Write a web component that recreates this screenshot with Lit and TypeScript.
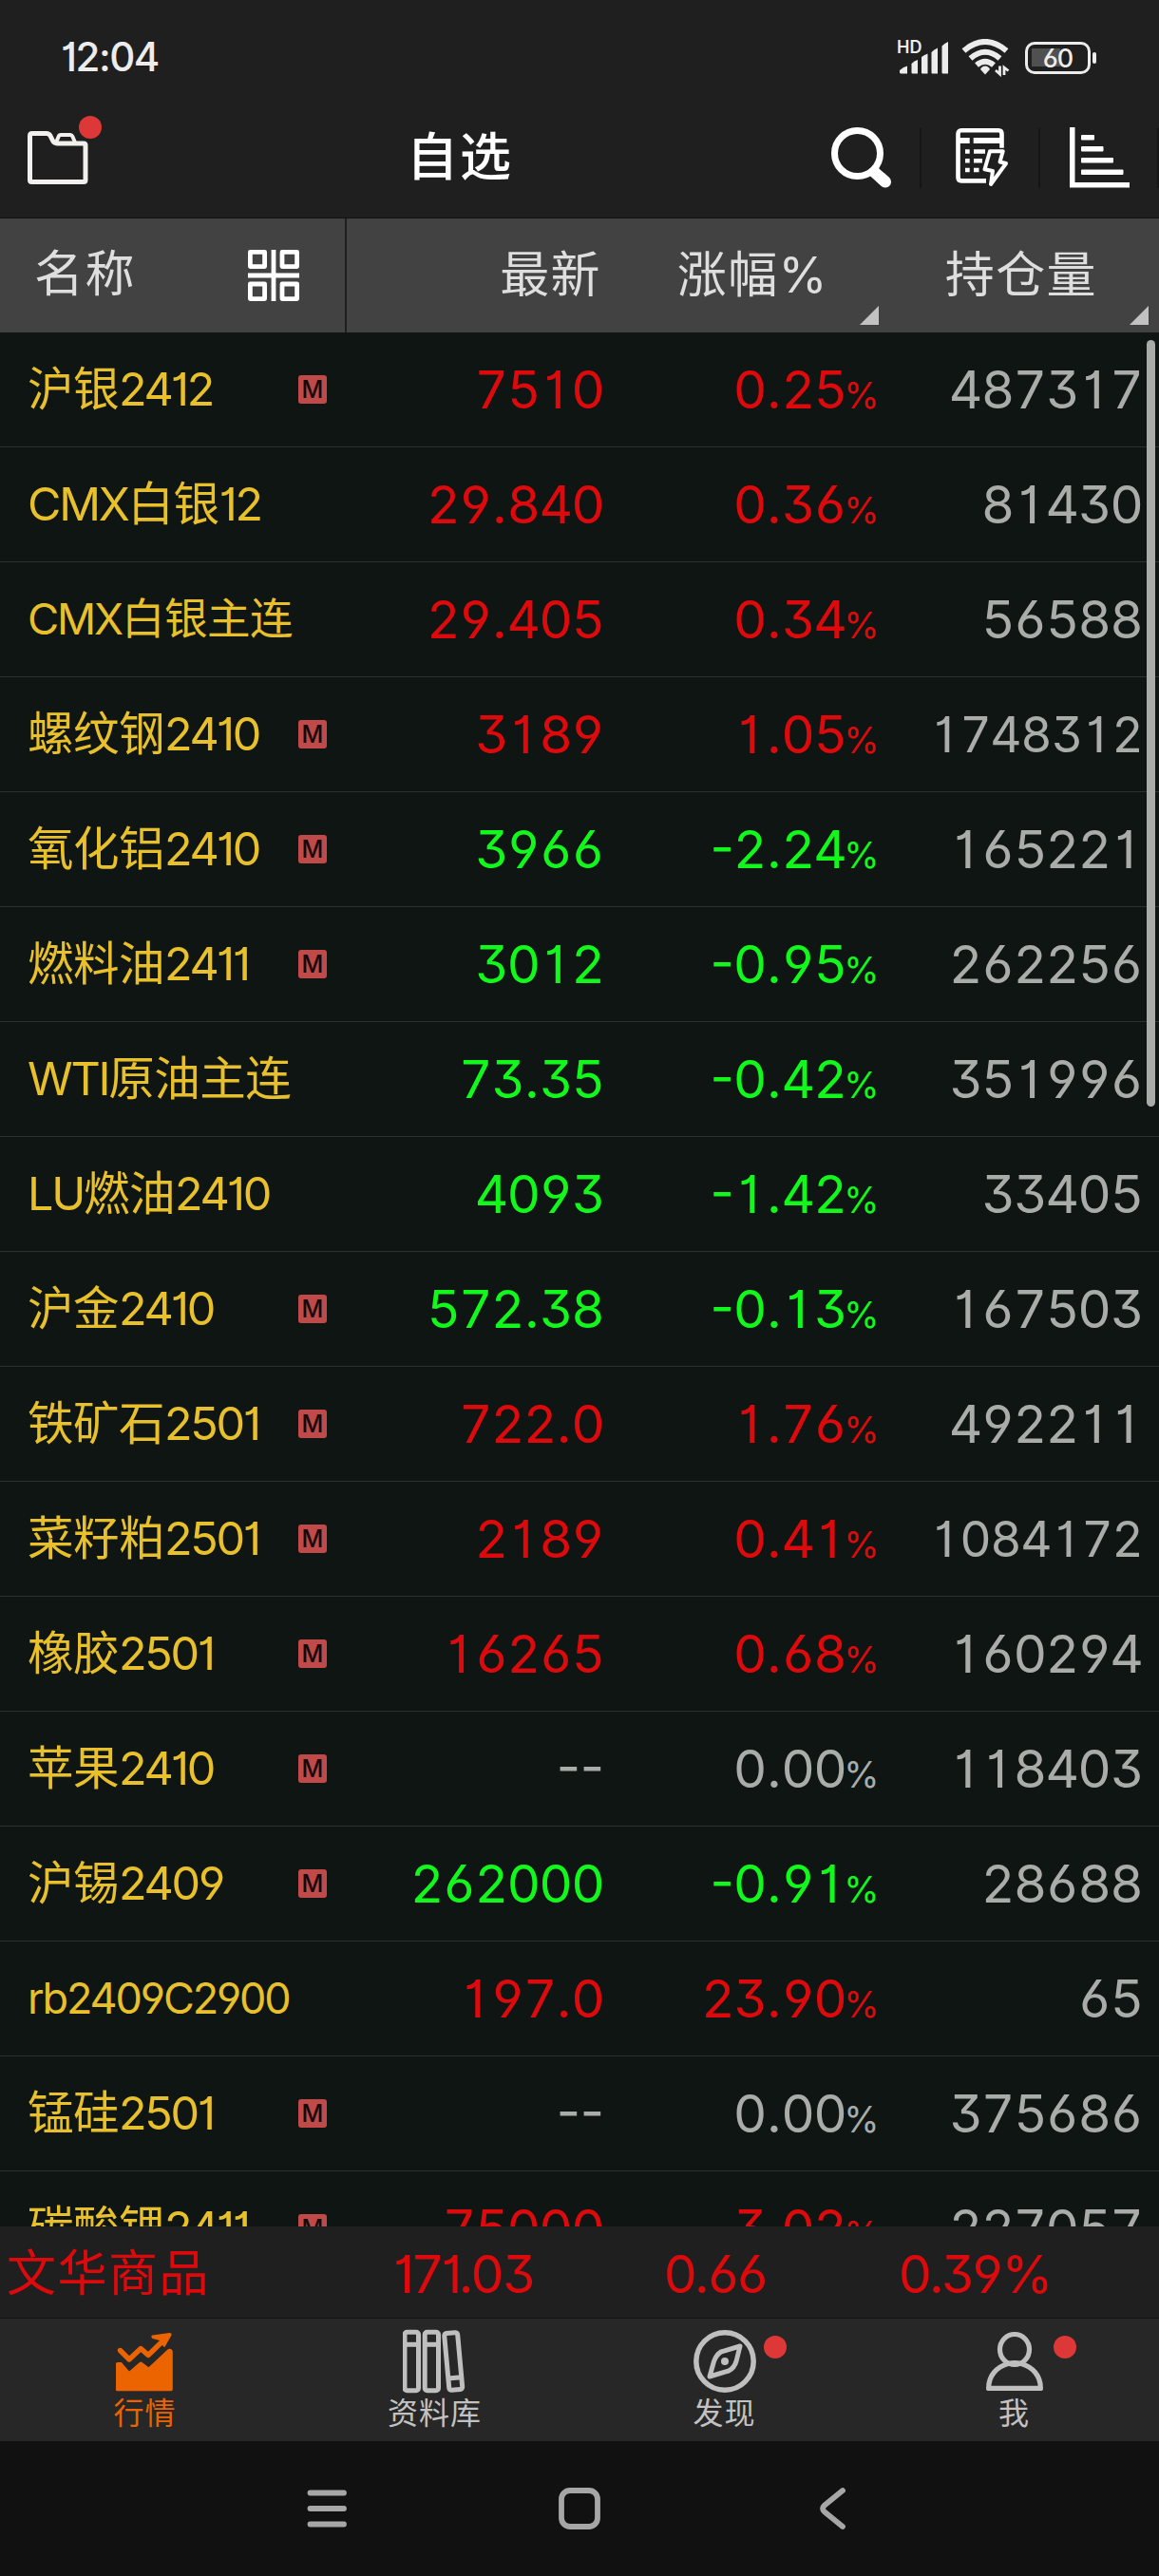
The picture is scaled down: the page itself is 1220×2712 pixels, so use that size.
import { LitElement, html, css, svg, nothing } from "lit";
import { customElement, property } from "lit/decorators.js";
import { classMap } from "lit/directives/class-map.js";

type Tone = "up" | "down" | "flat";
type NameSize = "" | "mid" | "small";
interface Quote {
  name: string;
  main: boolean;
  price: string;
  change: string;
  volume: string;
  tone: Tone;
  size?: NameSize;
}

const q = (name: string, main: boolean, price: string, change: string, volume: string, tone: Tone, size: NameSize = ""): Quote =>
  ({ name, main, price, change, volume, tone, size });

const QUOTES: Quote[] = [
  q("沪银2412", true, "7510", "0.25", "487317", "up"),
  q("CMX白银12", false, "29.840", "0.36", "81430", "up"),
  q("CMX白银主连", false, "29.405", "0.34", "56588", "up", "mid"),
  q("螺纹钢2410", true, "3189", "1.05", "1748312", "up"),
  q("氧化铝2410", true, "3966", "-2.24", "165221", "down"),
  q("燃料油2411", true, "3012", "-0.95", "262256", "down"),
  q("WTI原油主连", false, "73.35", "-0.42", "351996", "down"),
  q("LU燃油2410", false, "4093", "-1.42", "33405", "down"),
  q("沪金2410", true, "572.38", "-0.13", "167503", "down"),
  q("铁矿石2501", true, "722.0", "1.76", "492211", "up"),
  q("菜籽粕2501", true, "2189", "0.41", "1084172", "up"),
  q("橡胶2501", true, "16265", "0.68", "160294", "up"),
  q("苹果2410", true, "--", "0.00", "118403", "flat"),
  q("沪锡2409", true, "262000", "-0.91", "28688", "down"),
  q("rb2409C2900", false, "197.0", "23.90", "65", "up", "small"),
  q("锰硅2501", true, "--", "0.00", "375686", "flat"),
  q("碳酸锂2411", true, "75000", "3.02", "227057", "up"),
];

/** Renders a figure with tabular digits and narrow punctuation. */
const figure = (text: string) =>
  [...text].map((c) => html`<span class=${c === "." ? "pt" : c === "-" ? "mn" : c === "1" ? "dg one" : "dg"}>${c}</span>`);

/** Splits a contract name so that its Latin runs can be set tighter. */
const nameRuns = (name: string) =>
  (name.match(/[\x21-\x7e]+|[^\x21-\x7e]+/g) ?? []).map((run) =>
    /[\x21-\x7e]/.test(run) ? html`<span class="lat">${run}</span>` : run);

@customElement("quote-row")
class QuoteRow extends LitElement {
  @property({ attribute: false }) quote!: Quote;

  static styles = css`
    :host { display: block; flex: none; }
    .row {
      box-sizing: border-box;
      height: 121px;
      display: grid;
      grid-template-columns: 314px 30px 292px 287px 281px;
      align-items: center;
      border-bottom: 1px solid #2c312e;
      white-space: nowrap;
    }
    .name { padding-left: 29px; color: #e8c02c; font-size: 48.5px; letter-spacing: -0.5px; line-height: 60px; }
    .name.mid { font-size: 45.5px; }
    .name.small { font-size: 45px; }
    .lat { letter-spacing: -0.047em; }
    .badge {
      width: 30px; height: 30px; border-radius: 3px; background: #c04a49; color: #1c0707;
      font-size: 25px; line-height: 30px; text-align: center; font-weight: 500;
    }
    .fig { display: flex; justify-content: flex-end; align-items: baseline; font-size: 55px; line-height: 66px; }
    .dg { width: 33.9px; display: flex; justify-content: center; }
    .dg.one { box-sizing: border-box; padding-right: 3px; }
    .pt { width: 16.7px; display: flex; justify-content: center; }
    .mn { width: 25px; display: flex; justify-content: center; font-feature-settings: "case" 1; }
    .pct { font-size: 38px; width: 32px; line-height: 40px; display: flex; justify-content: center; }
    .up { color: #dc0a0c; }
    .down { color: #12f81c; }
    .flat, .vol { color: #a9aca9; }
    .vol { padding-right: 1px; }
    .vol.long { font-size: 51.5px; }
    .vol.long .dg { width: 32px; }
  `;

  render() {
    const { name, main, price, change, volume, tone, size } = this.quote;
    return html`
      <div class="row">
        <div class=${classMap({ name: true, mid: size === "mid", small: size === "small" })}>${nameRuns(name)}</div>
        ${main ? html`<div class="badge">M</div>` : html`<div></div>`}
        <div class="fig ${tone}">${figure(price)}</div>
        <div class="fig ${tone}">${figure(change)}<span class="pct">%</span></div>
        <div class=${classMap({ fig: true, vol: true, long: volume.length > 6 })}>${figure(volume)}</div>
      </div>
    `;
  }
}

const folderIcon = svg`<svg width="64" height="56" viewBox="0 0 64 56" fill="none" stroke="#f1f0ec" stroke-width="5" stroke-linejoin="round">
  <path d="M2.500 5V51.500Q2.500 53.500 4.500 53.500H59Q61 53.500 61 51.500V15Q61 13 59 13H31Q28 13 26.500 10L24 5Q22.500 2.500 20 2.500H5Q2.500 2.500 2.500 5Z"/>
  <path d="M30 12L33 5Q33.500 4 35 4H45Q46.500 4 47.500 6L50 12" stroke-width="4"/></svg>`;

const searchIcon = svg`<svg width="64" height="64" viewBox="0 0 64 64" fill="none" stroke="#fff">
  <circle cx="27.500" cy="27.500" r="24" stroke-width="7"/>
  <path d="M43 45L57.500 58" stroke-width="12"/><path d="M52 53L57 57.500" stroke-width="12" stroke-linecap="round"/></svg>`;

const sheetIcon = svg`<svg width="56" height="62" viewBox="0 0 56 62" fill="none" stroke="#fff" stroke-width="4.600">
  <path d="M48.500 20.700V6Q48.500 2.300 45 2.300H6Q2.500 2.300 2.500 6V51.500Q2.500 55.400 6 55.400H32" stroke-linejoin="round"/>
  <path d="M2 13H14.700M18.700 13H49" stroke-width="6"/>
  <path d="M10 24.500H14.700M19 24.500H31M10 34.200H14.700M19 34.200H28M10 44H14.700M19 44H24.500" stroke-width="4.400"/>
  <path d="M36 24.200H49.700L46.500 35.500L53 37L37 59L39 45L30.500 43.300Z" stroke-width="4" stroke-linejoin="round"/></svg>`;

const rankIcon = svg`<svg width="64" height="64" viewBox="0 0 64 64" fill="#fff">
  <path d="M0 0H5.500V58H63V63.500H0Z"/>
  <rect x="12" y="8" width="14" height="5.500" rx="1"/><rect x="12" y="20" width="23.500" height="5.500" rx="1"/>
  <rect x="12" y="32" width="34" height="5.500" rx="1"/><rect x="12" y="44.500" width="44.500" height="5.500" rx="1"/></svg>`;

const gridIcon = svg`<svg width="54" height="54" viewBox="0 0 54 54" fill="none" stroke="#fff" stroke-width="4.800" stroke-linejoin="round">
  <path d="M2.400 2.400H17.600V17.600H2.400ZM36 2.400H51.600V17.600H36ZM2.400 36H17.600V51.600H2.400ZM36 36H51.600V51.600H36Z"/>
  <path d="M27 0V54M0 27H54"/></svg>`;

const signalIcon = svg`<svg width="52" height="36" viewBox="0 0 52 36" fill="#ececec">
  <path d="M0 31Q4 27 8 26.500V34.500H1.500Q0 34.500 0 33Z"/>
  <path d="M12.500 24Q15.500 21 19 20V34.500H13.500Q12.500 34.500 12.500 33.500Z"/>
  <path d="M23 17Q26 14.500 29.500 13.500V34.500H24Q23 34.500 23 33.500Z"/>
  <path d="M33.500 12Q36 9 40 7.500V34.500H34.500Q33.500 34.500 33.500 33.500Z"/>
  <path d="M44.500 5.500Q47 2.500 51 1V34.500H45.500Q44.500 34.500 44.500 33.500Z"/></svg>`;

const wifiIcon = svg`<svg width="52" height="40" viewBox="0 0 52 40" fill="none" stroke="#ececec" stroke-width="6">
  <path d="M2.500 12.500Q25 -6.500 47.500 12.500"/>
  <path d="M9.500 20.500Q25 7 40.500 20.500"/>
  <path d="M16 27.500Q25 20 34 27.500"/>
  <path d="M25 28.500Q28.500 28.500 30 32L25 37.500L20 32Q21.500 28.500 25 28.500Z" fill="#ececec" stroke="none"/>
  <path d="M40.500 28.500V37L36 33M45 38V30L49.500 33.500" stroke-width="2.800"/></svg>`;

const marketIcon = svg`<svg width="62" height="64" viewBox="0 0 62 64" fill="#ec6400">
  <path d="M-0.500 33Q0 31 2 31H5.800L14 40.500L25 31Q26.200 30.200 27.500 31L34.500 36.300L54.500 17.500Q56 16.300 58 17Q59.800 18 59.800 20V59.500Q59.800 61.200 58 61.200H1.200Q-0.500 61.200 -0.500 59.500Z"/>
  <path d="M4.500 18.500L14 28L26.200 16.500L34 23.500L50 8" fill="none" stroke="#ec6400" stroke-width="5.400" stroke-linecap="round" stroke-linejoin="round"/>
  <path d="M38.500 2.600L56.500 0Q59 0 58.500 2.500L52 14Q50.500 16 49.500 13.500L46 8L38.500 6Q36 3.500 38.500 2.600Z"/></svg>`;

const booksIcon = svg`<svg width="68" height="68" viewBox="0 0 68 68" fill="none" stroke="#bfbfbf" stroke-width="5">
  <rect x="2" y="3.200" width="14.500" height="61.500" rx="2.500"/><path d="M2 16.300H16.500"/>
  <rect x="23.200" y="3.200" width="14.300" height="61.500" rx="2.500"/><path d="M23.200 16.300H37.500"/>
  <g transform="rotate(-5.200 53.200 33.800)"><rect x="46.200" y="4" width="14" height="60" rx="2.500"/><path d="M46.200 51.500H60.200"/></g></svg>`;

const compassIcon = svg`<svg width="68" height="68" viewBox="0 0 68 68" fill="none" stroke="#bfbfbf" stroke-width="5.500" stroke-linejoin="round">
  <circle cx="34" cy="34" r="30.200"/>
  <path d="M50 18L46 34Q44 41 38 44L18 50L22.500 34Q25 27 30 24Z" stroke-width="5"/>
  <circle cx="34" cy="34" r="4" fill="#bfbfbf" stroke="none"/></svg>`;

const personIcon = svg`<svg width="62" height="66" viewBox="0 0 62 66" fill="none" stroke="#bfbfbf" stroke-width="5.200" stroke-linejoin="round">
  <ellipse cx="31" cy="19.500" rx="15.500" ry="16"/>
  <path d="M24 34.500C12 38 3.600 47 3.600 60.400H58.400C58.400 47 50 38 38 34.500Q31 32.500 24 34.500"/></svg>`;

const TABS = [
  { label: "行情", icon: marketIcon, active: true, dot: false },
  { label: "资料库", icon: booksIcon, active: false, dot: false },
  { label: "发现", icon: compassIcon, active: false, dot: true },
  { label: "我", icon: personIcon, active: false, dot: true },
];

@customElement("app-root")
class AppRoot extends LitElement {
  static styles = css`
    :host {
      display: flex; flex-direction: column; width: 1220px; height: 2712px; overflow: hidden;
      background: #1f1f1f;
      font-family: Inter, "Noto Sans CJK SC", sans-serif;
      font-weight: 400;
      font-feature-settings: "cv01" 1, "cv03" 1, "cv04" 1, "cv09" 1;
    }
    svg { display: block; flex: none; }
    .status { height: 118px; flex: none; display: flex; align-items: center; padding: 4px 66px 0 64px; box-sizing: border-box; color: #ececec; }
    .clock { font-size: 42px; font-weight: 500; letter-spacing: -1.5px; line-height: 52px; flex: 1; padding-bottom: 2px; }
    .signal { position: relative; padding-left: 3px; margin-right: 13px; }
    .hd { position: absolute; left: 0; top: -3px; font-size: 18px; line-height: 20px; font-weight: 600; }
    .battery { box-sizing: border-box; width: 69px; height: 34px; border: 3.500px solid #ececec; border-radius: 10px; margin-left: 15px; display: flex; align-items: center; justify-content: center; font-size: 27px; font-weight: 500; letter-spacing: -1px; line-height: 27px; background: linear-gradient(#505050, #505050) 4px 4px / 30px 19px no-repeat; }
    .nub { width: 4px; height: 12px; border-radius: 2px; background: #ececec; margin: 0 0 0 2px; }
    .top { height: 112px; flex: none; display: flex; align-items: flex-start; padding-left: 29px; box-sizing: border-box; border-bottom: 1px solid #111; }
    .folder-wrap { position: relative; padding-top: 20px; width: 399px; }
    .dot { position: absolute; width: 24px; height: 24px; border-radius: 50%; background: #de3738; }
    .folder-wrap .dot { left: 54px; top: 4px; }
    .title { color: #fff; font-size: 54px; font-weight: 500; line-height: 60px; letter-spacing: 2px; padding-top: 18px; flex: 1; }
    .tools { display: flex; align-items: center; padding-top: 16px; }
    .sep { width: 2px; height: 63px; background: #151515; }
    .sep.a { margin: 0 36px 0 29px; } .sep.b { margin: 0 31px; } .sep.c { margin-left: 28px; }
    .head { height: 120px; flex: none; display: grid; grid-template-columns: 363px 2px 271px 289px 295px; align-items: center; background: #424242; color: #dedede; font-size: 52px; letter-spacing: 1.400px; }
    .namecell { display: flex; align-items: center; justify-content: space-between; padding: 0 48px 0 36px; }
    .namecell span { line-height: 60px; padding-bottom: 3px; }
    .vline { align-self: stretch; background: #1f1f1f; }
    .col { position: relative; text-align: right; height: 120px; line-height: 120px; }
    .tri { position: absolute; bottom: 8px; right: 0; width: 0; height: 0; border-left: 20px solid transparent; border-bottom: 20px solid #c2c2c2; }
    .c1 { padding-right: 3px; } .c2 { padding-right: 53px; } .c3 { padding-right: 65px; }
    .c3 .tri { right: 11px; }
    .list { position: relative; height: 1994px; flex: none; overflow: hidden; background: #0f1512; display: flex; flex-direction: column; }
    .thumb { position: absolute; left: 1207px; top: 8px; width: 9px; height: 807px; border-radius: 5px; background: #a9aba9; }
    .index { height: 96px; flex: none; box-sizing: border-box; padding-top: 3px; display: grid; grid-template-columns: 407px 285px 247px 1fr; align-items: center; padding-left: 7px; color: #dc0a0c; font-size: 55px; letter-spacing: -1.300px; line-height: 66px; }
    .index .label { font-size: 52px; letter-spacing: 1.500px; }
    .tabs { height: 130px; flex: none; box-sizing: border-box; border-top: 1.500px solid #131313; background: #272727; display: grid; grid-template-columns: repeat(4, 1fr); }
    .tab { position: relative; display: flex; flex-direction: column; align-items: center; color: #c2c2c2; font-size: 32px; letter-spacing: 1px; }
    .tab.active { color: #ec6400; }
    .ic { height: 79px; display: flex; align-items: flex-end; }
    .lab { line-height: 40px; padding-top: 1px; }
    .tab .dot { left: 194px; top: 18px; }
    .system { flex: 1; background: #111; display: flex; justify-content: center; }
  `;

  render() {
    return html`
      <div class="status">
        <div class="clock">12:04</div>
        <div class="signal"><span class="hd">HD</span>${signalIcon}</div>
        ${wifiIcon}
        <div class="battery">60</div><div class="nub"></div>
      </div>
      <div class="top">
        <div class="folder-wrap">${folderIcon}<span class="dot"></span></div>
        <div class="title">自选</div>
        <div class="tools">
          ${searchIcon}<span class="sep a"></span>
          ${sheetIcon}<span class="sep b"></span>
          ${rankIcon}<span class="sep c"></span>
        </div>
      </div>
      <div class="head">
        <div class="namecell"><span>名称</span>${gridIcon}</div>
        <div class="vline"></div>
        <div class="col c1">最新</div>
        <div class="col c2">涨幅%<span class="tri"></span></div>
        <div class="col c3">持仓量<span class="tri"></span></div>
      </div>
      <div class="list">
        ${QUOTES.map((quote) => html`<quote-row .quote=${quote}></quote-row>`)}
        <div class="thumb"></div>
      </div>
      <div class="index">
        <span class="label">文华商品</span><span>171.03</span><span>0.66</span><span>0.39%</span>
      </div>
      <div class="tabs">
        ${TABS.map((t) => html`
          <div class=${classMap({ tab: true, active: t.active })}>
            <div class="ic">${t.icon}</div>
            <div class="lab">${t.label}</div>
            ${t.dot ? html`<span class="dot"></span>` : nothing}
          </div>`)}
      </div>
      <div class="system">
        <svg width="1220" height="142" viewBox="0 0 1220 142" fill="none" stroke="#a6a6a6" stroke-width="5.800" stroke-linecap="round" stroke-linejoin="round">
          <path d="M326.500 54.500H362M326.500 71H362M326.500 87.500H362"/>
          <rect x="591" y="52" width="38" height="38" rx="9"/>
          <path d="M887 52L868 67.500Q864 71 868 74.500L887 90"/>
        </svg>
      </div>
    `;
  }
}
